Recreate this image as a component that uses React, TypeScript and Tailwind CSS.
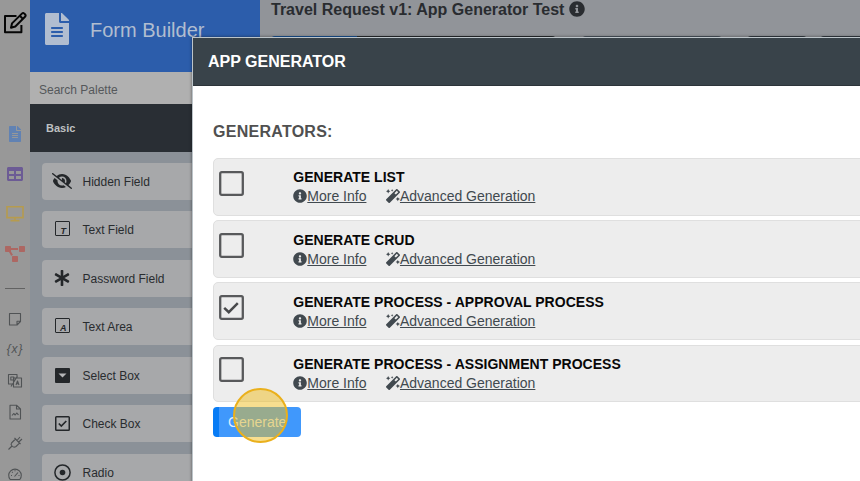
import type { ReactNode } from "react";
import {
  FaFileAlt,
  FaInfoCircle,
  FaMagic,
  FaProjectDiagram,
  FaTable,
  FaAsterisk,
} from "react-icons/fa";
import { FaEyeSlash } from "react-icons/fa6";

function EditIcon() {
  return (
    <svg width="24" height="24" viewBox="0 0 24 24" fill="none" stroke="#060606" strokeWidth="2" strokeLinejoin="round">
      <path d="M13.500 4.900H2v16.300H18.400V14" />
      <path d="M8 16.700l1-4.300L18.900 2.600a1.700 1.700 0 0 1 2.400 0l.7.700a1.700 1.700 0 0 1 0 2.400L12.300 15.500z" />
      <path d="M16.800 4.800l3.100 3.100" />
    </svg>
  );
}

function Stroke({ children, width = 16 }: { children: ReactNode; width?: number }) {
  return (
    <svg width={width} height={width} viewBox="0 0 16 16" fill="none" stroke="#505355" strokeWidth="1.1" strokeLinejoin="round">
      {children}
    </svg>
  );
}

function Slot({ className, children }: { className: string; children: ReactNode }) {
  return <div className={"flex w-full shrink-0 items-center justify-center " + className}>{children}</div>;
}

function Rail() {
  return (
    <nav className="flex w-[30px] shrink-0 flex-col bg-[#989898]">
      <Slot className="h-[46px]"><EditIcon /></Slot>
      <Slot className="mt-[76px] h-6"><FaFileAlt size={16} color="#6182b3" /></Slot>
      <Slot className="mt-4 h-6"><FaTable size={16} color="#6c5b95" /></Slot>
      <Slot className="mt-4 h-6">
        <svg width="18" height="18" viewBox="0 0 18 18" fill="none" stroke="#b69b4e" strokeWidth="1.6">
          <path d="M1 1.800h16v10.800H1zM9 12.600v3M4.500 15.600h9" />
        </svg>
      </Slot>
      <Slot className="mt-4 h-6"><FaProjectDiagram size={20} color="#ad6762" /></Slot>
      <div className="mx-auto mt-[22px] h-px w-5 shrink-0 bg-[#626262]" />
      <Slot className="mt-[18px] h-6">
        <Stroke><path d="M2.500 2.500h11v8l-3.500 3.500H2.500zM13.500 10.300H10V14" /></Stroke>
      </Slot>
      <Slot className="mt-[6px] h-6">
        <span className="font-['Liberation_Sans',sans-serif] text-[12px] italic leading-none tracking-[0.8px] text-[#505355]">{"{x}"}</span>
      </Slot>
      <Slot className="mt-2 h-6">
        <Stroke>
          <path d="M10 4.500V1.500H1.500v9.500H5M6.500 5h8v9h-8zM3.800 4h3v3h-3zM4 13.500L10.500 3M9 12l1.500-4L12 12M9.500 10.800h2" />
        </Stroke>
      </Slot>
      <Slot className="mt-[7px] h-6">
        <Stroke><path d="M3 1.200h6.500L13.500 5v10H3zM9.500 1.200V5h4M5 11.500l1.700-2 1.500 1.500 1.500-2 1.800 1.800" /></Stroke>
      </Slot>
      <Slot className="mt-[7px] h-6">
        <Stroke><path d="M1.500 14.500L5 11M4.500 8l4-4 4 4.200-3.500 3.300c-1.500 1-3 .6-4-.5s-1.400-2-.5-3zM7.500 3l6 6M10 5.500L13 2M11.800 7L15 4" /></Stroke>
      </Slot>
      <Slot className="mt-[7px] h-6">
        <Stroke><path d="M3.200 13.500a6.300 6.300 0 1 1 9.600 0zM7.500 10.500l3.500-4M4 9.500h1M11.500 9.500h1M5 6l.8.700M8 4.300v1" /></Stroke>
      </Slot>
    </nav>
  );
}

function LetterBox({ letter }: { letter: string }) {
  return (
    <span className="mb-[3px] flex h-[15px] w-[15px] items-end justify-center rounded-[1px] border-[1.5px] border-[#24272a] pl-0.5 text-[9px] font-bold italic leading-[8px] text-[#24272a]">
      {letter}
    </span>
  );
}

const palette: { label: string; icon: ReactNode }[] = [
  { label: "Hidden Field", icon: <FaEyeSlash size={20} /> },
  { label: "Text Field", icon: <LetterBox letter="T" /> },
  { label: "Password Field", icon: <FaAsterisk size={16} /> },
  { label: "Text Area", icon: <LetterBox letter="A" /> },
  {
    label: "Select Box",
    icon: (
      <svg width="15" height="15" viewBox="0 0 15 15">
        <rect width="15" height="15" rx="1" fill="#24272a" />
        <path d="M3.500 5.500h8l-4 4z" fill="#b5b6b8" />
      </svg>
    ),
  },
  {
    label: "Check Box",
    icon: (
      <svg width="15" height="15" viewBox="0 0 15 15" fill="none" stroke="#24272a" strokeWidth="1.500">
        <rect x=".75" y=".75" width="13.500" height="13.500" rx=".8" />
        <path d="M3.800 7.500l2.500 2.500 5-5" strokeWidth="1.700" />
      </svg>
    ),
  },
  {
    label: "Radio",
    icon: (
      <svg width="17" height="17" viewBox="0 0 17 17">
        <circle cx="8.500" cy="8.500" r="7.600" fill="none" stroke="#24272a" strokeWidth="1.500" />
        <circle cx="8.500" cy="8.500" r="2.800" fill="#24272a" />
      </svg>
    ),
  },
];

function Palette() {
  return (
    <aside className="flex w-[230px] shrink-0 flex-col bg-[#8b9198]">
      <header className="flex h-[72px] shrink-0 bg-[#2c5dab] pl-[15px] pt-[13px] text-[#b1bdd0]">
        <FaFileAlt className="h-8 w-6" />
        <h1 className="ml-[21px] mt-[2px] text-[20px] leading-[30px]">Form Builder</h1>
      </header>
      <div className="flex h-8 shrink-0 items-center bg-[#b0b0b0] pl-[9px] pt-1 text-[12px] text-[#55585b]">Search Palette</div>
      <div className="flex h-12 shrink-0 items-center bg-[#292e34] pl-4 text-[11px] font-bold text-[#bec0c2]">Basic</div>
      <ul className="flex flex-col gap-[11.6px] pl-[12px] pt-[10.500px]">
        {palette.map(({ label, icon }) => (
          <li key={label} className="flex h-[37px] items-center rounded-[4px] bg-[#a7a8aa] text-[12px] text-[#292c2f]">
            <span className="flex w-[40.500px] justify-center text-[#24272a]">{icon}</span>
            <span className="pt-px">{label}</span>
          </li>
        ))}
      </ul>
    </aside>
  );
}

function Check({ checked }: { checked: boolean }) {
  return (
    <svg width="25" height="25" viewBox="0 0 25 25" fill="none" className="mt-[11.500px] shrink-0">
      <rect x="1.200" y="1.200" width="22.600" height="22.600" rx="1.500" stroke="#58595b" strokeWidth="2.300" />
      {checked && <path d="M5.200 12.800l4.600 4.400 9-9" stroke="#48494b" strokeWidth="2.500" />}
    </svg>
  );
}

const generators = [
  { title: "GENERATE LIST", checked: false },
  { title: "GENERATE CRUD", checked: false },
  { title: "GENERATE PROCESS - APPROVAL PROCESS", checked: true },
  { title: "GENERATE PROCESS - ASSIGNMENT PROCESS", checked: false },
];

function Modal() {
  return (
    <section className="absolute left-[192px] top-[37px] flex h-[450px] w-[680px] flex-col border-l border-t border-[#bcc4c9] bg-white shadow-[0_0_3px_rgba(0,0,0,0.5)]">
      <header className="flex h-12 shrink-0 items-center border-b border-[#2d343a] bg-[#39434a] pl-[15px] text-[16px] font-bold text-white">
        <span>APP GENERATOR</span>
      </header>
      <h2 className="ml-5 mt-[35px] text-[16px] font-bold leading-[22px] tracking-[0.270px] text-[#505050]">GENERATORS:</h2>
      <div className="ml-5 mt-[15px] flex flex-col gap-[4.700px]">
        {generators.map(({ title, checked }) => (
          <div key={title} className="flex h-[57.500px] rounded-l-[5px] border border-[#dfdfdf] bg-[#ededed] pl-[5px]">
            <Check checked={checked} />
            <div className="ml-[49.300px] pt-[8.400px]">
              <div className="whitespace-nowrap text-[14px] font-bold leading-[20px] tracking-[0.020px] text-[#080808]">{title}</div>
              <div className="flex items-center whitespace-nowrap text-[14px] leading-[18px] text-[#41494f]">
                <FaInfoCircle size={14} className="shrink-0" />
                <span className="underline">More Info</span>
                <FaMagic size={14} className="ml-[19.500px] shrink-0" />
                <span className="underline">Advanced Generation</span>
              </div>
            </div>
          </div>
        ))}
      </div>
      <div className="relative ml-5 mt-[5px] h-[30px] w-[88px]">
        <button className="flex h-full w-full items-center rounded-[4px] border-l-[6px] border-[#087cf5] bg-[#4098fc] pl-[9px] pt-px text-[14px] text-[#deedff]">
          Generate
        </button>
        <span className="absolute -top-[19px] left-[20px] h-[55px] w-[55px] rounded-full border-2 border-[#eab01c] bg-[#f0bd20]/50" />
      </div>
    </section>
  );
}

export default function App() {
  return (
    <main className="relative flex h-[481px] w-[860px] overflow-hidden bg-[#919499] font-['Liberation_Sans',Arial,sans-serif]">
      <Rail />
      <Palette />
      <section className="flex flex-1 flex-col pl-[11px]">
        <div className="flex h-[36px] items-start gap-[5px] whitespace-nowrap text-[16px] font-bold leading-[19px] text-[#292c30]">
          <h2>Travel Request v1: App Generator Test</h2>
          <FaInfoCircle size={16} className="mt-px" />
        </div>
        <div className="flex h-3">
          <i className="w-[86px] rounded-l bg-[#195396]" />
          <i className="w-[199px] rounded-r bg-[#282c30]" />
          <i className="ml-[26px] w-[140px] rounded bg-[#4c5660]" />
          <i className="ml-[25px] w-[60px] rounded bg-[#353c43]" />
          <i className="ml-[13px] w-[60px] rounded bg-[#353c43]" />
        </div>
      </section>
      <Modal />
    </main>
  );
}
